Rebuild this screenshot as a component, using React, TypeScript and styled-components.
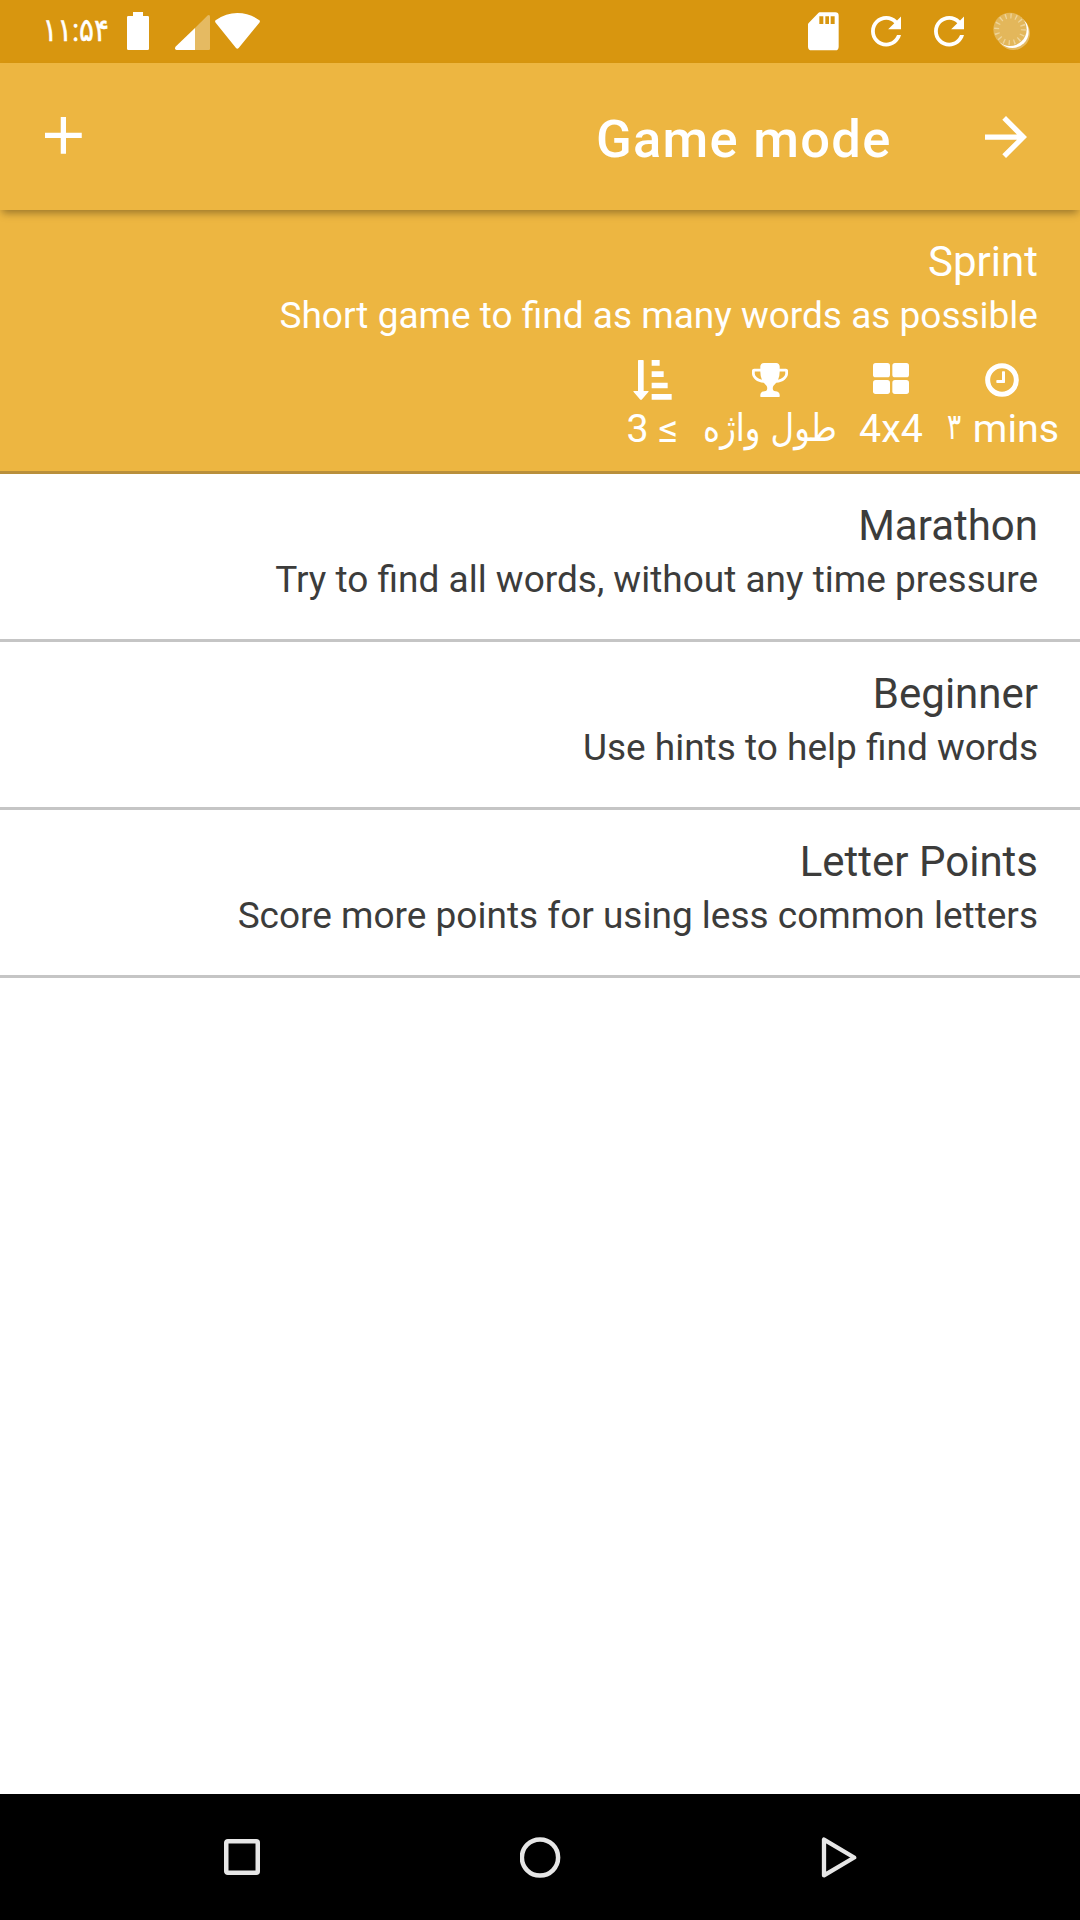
import React from "react";
import styled, { createGlobalStyle } from "styled-components";

const GlobalStyle = createGlobalStyle`
  * { box-sizing: border-box; }
  html, body { margin: 0; padding: 0; background: #fff; }
  body { font-family: Roboto, "DejaVu Sans", sans-serif; }
  svg { display: block; flex: none; }
`;

const Screen = styled.div`
  width: 1080px;
  height: 1920px;
  display: flex;
  flex-direction: column;
  overflow: hidden;
  background: #fff;
`;

const StatusBar = styled.header`
  flex: none;
  height: 63px;
  padding: 0 50px 0 42px;
  display: flex;
  justify-content: space-between;
  align-items: flex-start;
  background: #d8960f;
  color: #fff;
`;

const StatusGroup = styled.div`
  display: flex;
  align-items: flex-start;
`;

const Glyph = styled.svg<{ $top?: number; $left?: number; $right?: number }>`
  margin-top: ${(p) => p.$top ?? 0}px;
  margin-left: ${(p) => p.$left ?? 0}px;
  margin-right: ${(p) => p.$right ?? 0}px;
`;

const Clock = styled.time`
  width: 66px;
  margin-top: 9px;
  font-size: 32px;
  line-height: 42px;
  letter-spacing: -2.4px;
  white-space: nowrap;
  direction: ltr;
  unicode-bidi: bidi-override;
  -webkit-text-stroke: 0.5px #fff;
  transform: scaleX(0.87);
  transform-origin: 3px 50%;
`;

const AppBar = styled.div`
  flex: none;
  position: relative;
  z-index: 1;
  height: 147px;
  padding: 0 53px 0 45px;
  display: flex;
  align-items: center;
  background: #edb641;
  color: #fff;
  box-shadow: 0 5px 8px -2px rgba(0, 0, 0, 0.35);
`;

const AddIcon = styled.svg`
  margin-bottom: 2px;
`;

const Title = styled.h1`
  margin: 0 93.5px 0 auto;
  padding-top: 4px;
  font-size: 52.5px;
  line-height: 62px;
  font-weight: 500;
  letter-spacing: 1.25px;
  white-space: nowrap;
`;

const List = styled.main`
  flex: 1;
  display: flex;
  flex-direction: column;
`;

const Row = styled.section<{ $selected?: boolean }>`
  flex: none;
  height: ${(p) => (p.$selected ? 264 : 168)}px;
  padding: 27px 42px 0 0;
  border-bottom: 3px solid ${(p) => (p.$selected ? "#b98f3b" : "#c5c5c5")};
  background: ${(p) => (p.$selected ? "#edb641" : "#fff")};
  color: ${(p) => (p.$selected ? "#fff" : "#3c3c3b")};
  text-align: right;
`;

const Name = styled.h2`
  margin: 0 0 8px;
  font-size: 42px;
  line-height: 49px;
  font-weight: 400;
`;

const Description = styled.p`
  margin: 0;
  font-size: 37px;
  line-height: 43px;
`;

const Stats = styled.div`
  display: flex;
  justify-content: flex-end;
  margin: 23px -22px 0 0;
`;

const Stat = styled.div<{ $width: number }>`
  width: ${(p) => p.$width}px;
  margin-left: 22px;
  display: flex;
  flex-direction: column;
  align-items: center;
`;

const StatIcon = styled.div`
  height: 46px;
  display: flex;
  align-items: flex-start;
`;

const StatLabel = styled.span`
  font-size: 39.4px;
  line-height: 46px;
  white-space: nowrap;
`;

const ArabicWord = styled.span`
  display: inline-block;
  font-size: 32.5px;
  line-height: 46px;
  word-spacing: 2px;
  transform: translateY(-0.5px) scaleY(1.18);
  transform-origin: 50% 75%;
`;

const PersianDigit = styled.span`
  display: inline-block;
  font-size: 30px;
  line-height: 40px;
  margin-right: 1px;
  transform: translateY(-3px) scale(0.88, 1.2);
  transform-origin: 50% 75%;
`;

const NavBar = styled.nav`
  flex: none;
  height: 126px;
  padding: 0 223px 0 224px;
  display: flex;
  justify-content: space-between;
  align-items: center;
  background: #000;
`;

const RefreshIcon = ({ left }: { left: number }) => (
  <Glyph $top={16} $left={left} width="30.5" height="30.5" viewBox="4 4 16 16" fill="#fff">
    <path d="M17.65 6.35C16.2 4.9 14.21 4 12 4c-4.42 0-7.99 3.58-7.99 8s3.57 8 7.99 8c3.73 0 6.84-2.55 7.73-6h-2.08c-.82 2.33-3.04 4-5.65 4-3.31 0-6-2.69-6-6s2.69-6 6-6c1.66 0 3.14.69 4.22 1.78L13 11h7V4l-2.35 2.35z" />
  </Glyph>
);

const SpinnerIcon = () => (
  <Glyph $top={12} $left={28.5} width="37.5" height="38.5" viewBox="637 36 112.5 115.5">
    <circle cx="698" cy="100" r="50" fill="#fff" fillOpacity=".35" />
    <circle cx="695" cy="95" r="49" fill="#fff" />
    <circle cx="688" cy="88" r="50" fill="#e3b75b" />
    <circle cx="688" cy="88" r="40" fill="none" stroke="#efd498" strokeWidth="15" strokeDasharray="4 11.7" />
  </Glyph>
);

const SortIcon = () => (
  <svg width="39" height="40" viewBox="100 60 117 120" fill="#fff">
    <path d="M115 62q0-2 2-2h13q2 0 2 2v91h14q2 1 0 3l-20 23q-2 1-4 0l-20-23q-2-2 0-3h13z" />
    <path d="M156 60h24v17h-24zM156 94h36v17h-36zM156 128h48v17h-48zM156 162h60v17h-60z" />
  </svg>
);

const TrophyIcon = () => (
  <Glyph $top={3} width="36" height="34" viewBox="0 -102 1664 1536" preserveAspectRatio="none" fill="#fff">
    <path d="M458 653q-74-162-74-371h-256v96q0 78 94.5 162t235.5 113zm1078-275v-96h-256q0 209-74 371 141-29 235.5-113t94.5-162zm128-128v128q0 71-41.5 143t-112 130-173 97.5-215.5 44.5q-42 54-95 95-38 34-52.5 72.5t-14.5 89.5q0 54 30.5 91t97.5 37q75 0 133.5 45.5t58.5 114.5v64q0 14-9 23t-23 9h-832q-14 0-23-9t-9-23v-64q0-69 58.5-114.5t133.5-45.5q67 0 97.5-37t30.5-91q0-51-14.5-89.5t-52.5-72.5q-53-41-95-95-113-5-215.5-44.5t-173-97.5-112-130-41.5-143v-128q0-40 28-68t68-28h288v-96q0-66 47-113t113-47h576q66 0 113 47t47 113v96h288q40 0 68 28t28 68z" />
  </Glyph>
);

const GridIcon = () => (
  <Glyph $top={3} width="36" height="31" viewBox="99 69 108 93" fill="#fff">
    <rect x="99" y="69" width="51" height="43" rx="8" />
    <rect x="157" y="69" width="50" height="43" rx="8" />
    <rect x="99" y="120" width="51" height="42" rx="8" />
    <rect x="157" y="120" width="50" height="42" rx="8" />
  </Glyph>
);

const ClockIcon = () => (
  <Glyph $top={3} $right={2} width="34" height="34" viewBox="434 69 102 102" fill="none">
    <circle cx="485" cy="120" r="43" stroke="#fff" strokeWidth="15" />
    <path d="M485 96q0-2 2-2h5q2 0 2 2v31q0 2-2 2h-22q-2 0-2-2v-5q0-2 2-2h15z" fill="#fff" />
  </Glyph>
);

const modes = [
  { name: "Marathon", description: "Try to find all words, without any time pressure" },
  { name: "Beginner", description: "Use hints to help find words" },
  { name: "Letter Points", description: "Score more points for using less common letters" },
];

export default function App() {
  return (
    <>
      <GlobalStyle />
      <Screen>
        <StatusBar>
          <StatusGroup>
            <Clock>۱۱:۵۴</Clock>
            <Glyph $top={12} $left={19} width="22" height="38" viewBox="381 36 66 114" fill="#fff">
              <path d="M399 36h30v12h14q4 0 4 4v94q0 4-4 4h-58q-4 0-4-4V52q0-4 4-4h14z" />
            </Glyph>
            <Glyph $top={15} $left={26} width="35" height="35" viewBox="525 45 105 105" fill="#fff">
              <path d="M585 84L622 47q8-5 8 4v95q0 4-4 4h-41z" fillOpacity=".35" />
              <path d="M585 84v66h-55q-5 0-5-5q0-3 3-6z" />
            </Glyph>
            <Glyph $top={13} $left={5} width="45" height="36" viewBox="647 39 135 108" fill="#fff">
              <path d="M649 68q-4-5 1-8Q680 39 714 39Q749 39 779 60q5 3 1 8L718 144q-4 5-8 0z" />
            </Glyph>
          </StatusGroup>
          <StatusGroup>
            <Glyph $top={12} width="31" height="38.5" viewBox="81 36 93 115.5" fill="#fff">
              <path
                fillRule="evenodd"
                d="M116 37h47q10 0 10 10v93q0 11-10 11H92q-11 0-11-11V73q0-2 2-4l29-30q2-2 4-2zM115 49v23h12V49zM133 49v23h11V49zM149 49v23h12V49z"
              />
            </Glyph>
            <RefreshIcon left={32} />
            <RefreshIcon left={32.5} />
            <SpinnerIcon />
          </StatusGroup>
        </StatusBar>

        <AppBar>
          <AddIcon width="36.75" height="36.75" viewBox="5 5 14 14" fill="#fff">
            <path d="M19 13h-6v6h-2v-6H5v-2h6V5h2v6h6v2z" />
          </AddIcon>
          <Title>Game mode</Title>
          <svg width="42" height="42" viewBox="4 4 16 16" fill="#fff">
            <path d="M12 4l-1.41 1.41L16.17 11H4v2h12.17l-5.58 5.59L12 20l8-8z" />
          </svg>
        </AppBar>

        <List>
          <Row $selected>
            <Name>Sprint</Name>
            <Description>Short game to find as many words as possible</Description>
            <Stats>
              <Stat $width={57}>
                <StatIcon><SortIcon /></StatIcon>
                <StatLabel>3 ≤</StatLabel>
              </Stat>
              <Stat $width={134}>
                <StatIcon><TrophyIcon /></StatIcon>
                <StatLabel dir="rtl"><ArabicWord>طول واژه</ArabicWord></StatLabel>
              </Stat>
              <Stat $width={64}>
                <StatIcon><GridIcon /></StatIcon>
                <StatLabel>4x4</StatLabel>
              </Stat>
              <Stat $width={115}>
                <StatIcon><ClockIcon /></StatIcon>
                <StatLabel><PersianDigit>۳</PersianDigit> mins</StatLabel>
              </Stat>
            </Stats>
          </Row>
          {modes.map((mode) => (
            <Row key={mode.name}>
              <Name>{mode.name}</Name>
              <Description>{mode.description}</Description>
            </Row>
          ))}
        </List>

        <NavBar>
          <svg width="36" height="36" viewBox="0 0 36 36" fill="none" stroke="#e6e6e6" strokeWidth="4.5">
            <rect x="2.25" y="2.25" width="31.5" height="31.5" rx="1.5" />
          </svg>
          <Glyph $right={1} width="41" height="41" viewBox="0 0 41 41" fill="none" stroke="#e6e6e6" strokeWidth="4.5">
            <circle cx="20" cy="20.5" r="18.1" />
          </Glyph>
          <svg width="36" height="41" viewBox="0 0 36 41" fill="none" stroke="#e6e6e6" strokeWidth="4.3" strokeLinejoin="round">
            <path d="M3 2.6V38.4L33.2 20.5z" />
          </svg>
        </NavBar>
      </Screen>
    </>
  );
}
